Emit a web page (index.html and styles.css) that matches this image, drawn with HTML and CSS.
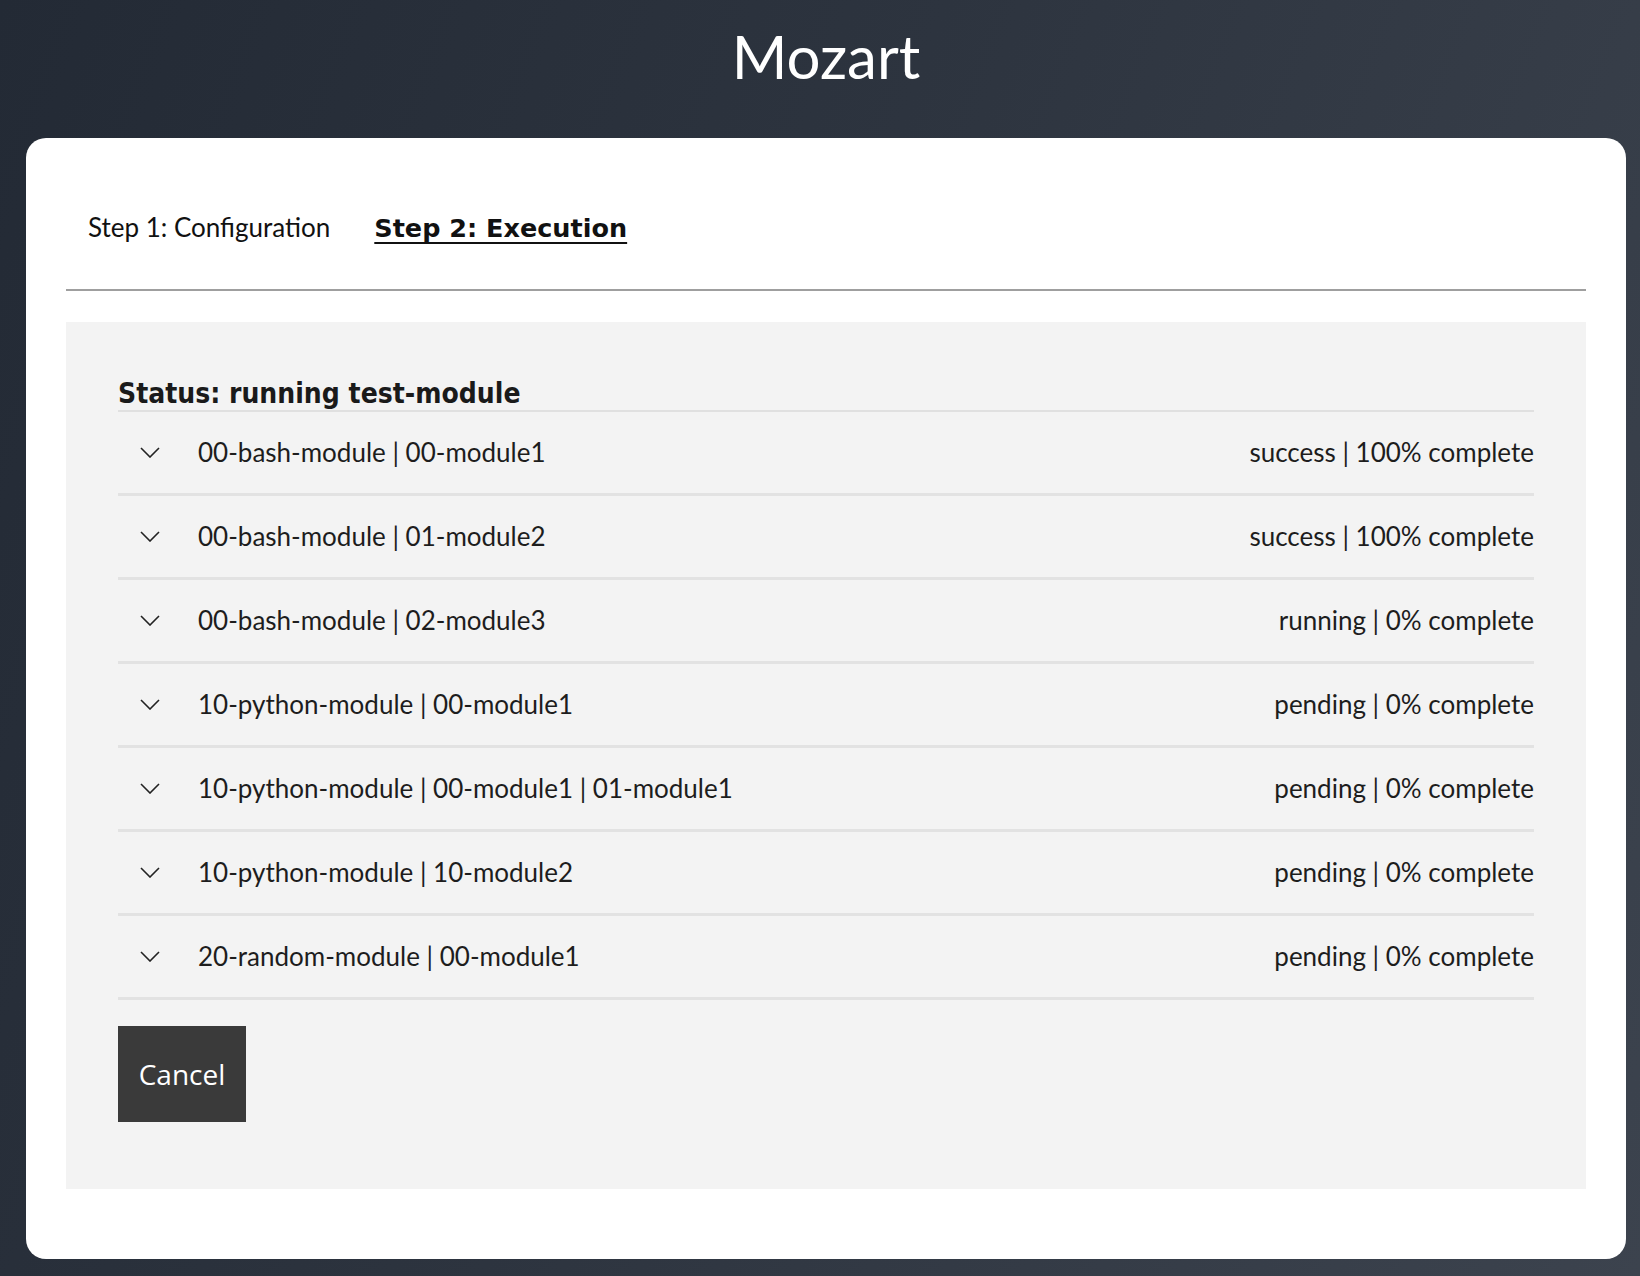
FILE: index.html
```html
<!DOCTYPE html>
<html lang="en">
<head>
<meta charset="utf-8">
<title>Mozart</title>
<link rel="stylesheet" href="styles.css">
</head>
<body>
<div class="app">
  <header class="top">
    <h1 class="brand">Mozart</h1>
  </header>
  <main class="card">
    <nav class="tabs">
      <a class="tab">Step 1: Configuration</a>
      <a class="tab tab-active">Step 2: Execution</a>
    </nav>
    <section class="panel">
      <h2 class="status">Status: running test-module</h2>
      <ul class="modules">
        <li class="module"><svg class="chev" viewBox="0 0 20 11"><polyline points="1,1 10,10 19,1"/></svg><span class="name">00-bash-module | 00-module1</span><span class="state">success | 100% complete</span></li>
        <li class="module"><svg class="chev" viewBox="0 0 20 11"><polyline points="1,1 10,10 19,1"/></svg><span class="name">00-bash-module | 01-module2</span><span class="state">success | 100% complete</span></li>
        <li class="module"><svg class="chev" viewBox="0 0 20 11"><polyline points="1,1 10,10 19,1"/></svg><span class="name">00-bash-module | 02-module3</span><span class="state">running | 0% complete</span></li>
        <li class="module"><svg class="chev" viewBox="0 0 20 11"><polyline points="1,1 10,10 19,1"/></svg><span class="name">10-python-module | 00-module1</span><span class="state">pending | 0% complete</span></li>
        <li class="module"><svg class="chev" viewBox="0 0 20 11"><polyline points="1,1 10,10 19,1"/></svg><span class="name">10-python-module | 00-module1 | 01-module1</span><span class="state">pending | 0% complete</span></li>
        <li class="module"><svg class="chev" viewBox="0 0 20 11"><polyline points="1,1 10,10 19,1"/></svg><span class="name">10-python-module | 10-module2</span><span class="state">pending | 0% complete</span></li>
        <li class="module"><svg class="chev" viewBox="0 0 20 11"><polyline points="1,1 10,10 19,1"/></svg><span class="name">20-random-module | 00-module1</span><span class="state">pending | 0% complete</span></li>
      </ul>
      <button class="cancel" type="button">Cancel</button>
    </section>
  </main>
</div>
</body>
</html>
```
FILE: styles.css
```css
* { box-sizing: border-box; }

html, body {
  margin: 0;
  padding: 0;
}

body {
  min-height: 1276px;
  background: linear-gradient(110deg, #232a35 0%, #2d343f 45%, #3c434e 100%);
  font-family: Lato, "Open Sans", sans-serif;
  color: #1c1c1c;
}

.app {
  padding: 0 14px 17px 26px;
}

.top {
  height: 138px;
  padding-top: 26px;
}

.brand {
  margin: 0;
  text-align: center;
  font-family: Lato, sans-serif;
  font-weight: 400;
  font-size: 60px;
  line-height: 60px;
  color: #ffffff;
}

.card {
  background: #ffffff;
  border-radius: 20px;
  padding: 0 40px 70px;
}

.tabs {
  display: flex;
  align-items: baseline;
  gap: 44px;
  padding: 69px 0 40.5px 22px;
  border-bottom: 2px solid #9f9f9f;
}

.tab {
  font-size: 26px;
  line-height: 40px;
  color: #111111;
}

.tab-active {
  font-family: "DejaVu Sans", Verdana, sans-serif;
  font-weight: 700;
  font-size: 25.5px;
  text-decoration: underline;
  text-decoration-thickness: 2px;
  text-underline-offset: 5px;
}

.panel {
  margin-top: 31px;
  background: #f3f3f3;
  padding: 52px 52px 67px;
}

.status {
  margin: 0;
  font-family: "DejaVu Sans Condensed", "DejaVu Sans", Tahoma, sans-serif;
  font-stretch: condensed;
  font-weight: 700;
  font-size: 28px;
  line-height: 33px;
  padding-top: 3px;
  border-bottom: 2px solid #e0e0e0;
  color: #1a1a1a;
}

.modules {
  list-style: none;
  margin: 0;
  padding: 0;
}

.module {
  display: flex;
  align-items: center;
  height: 84px;
  padding-left: 22px;
  border-bottom: 3px solid #e2e2e2;
  font-size: 26px;
  color: #1d1d1d;
}

.chev {
  width: 20px;
  height: 11px;
  flex: none;
  margin-right: 38px;
  fill: none;
  stroke: #222222;
  stroke-width: 1.6;
}

.name {
  flex: 1;
}

.state {
  text-align: right;
}

.cancel {
  display: block;
  margin-top: 26px;
  width: 128px;
  height: 96px;
  border: 0;
  border-radius: 0;
  background: #3a3a3a;
  color: #ffffff;
  font-family: "Open Sans", sans-serif;
  font-size: 28px;
  padding: 0;
}
```
